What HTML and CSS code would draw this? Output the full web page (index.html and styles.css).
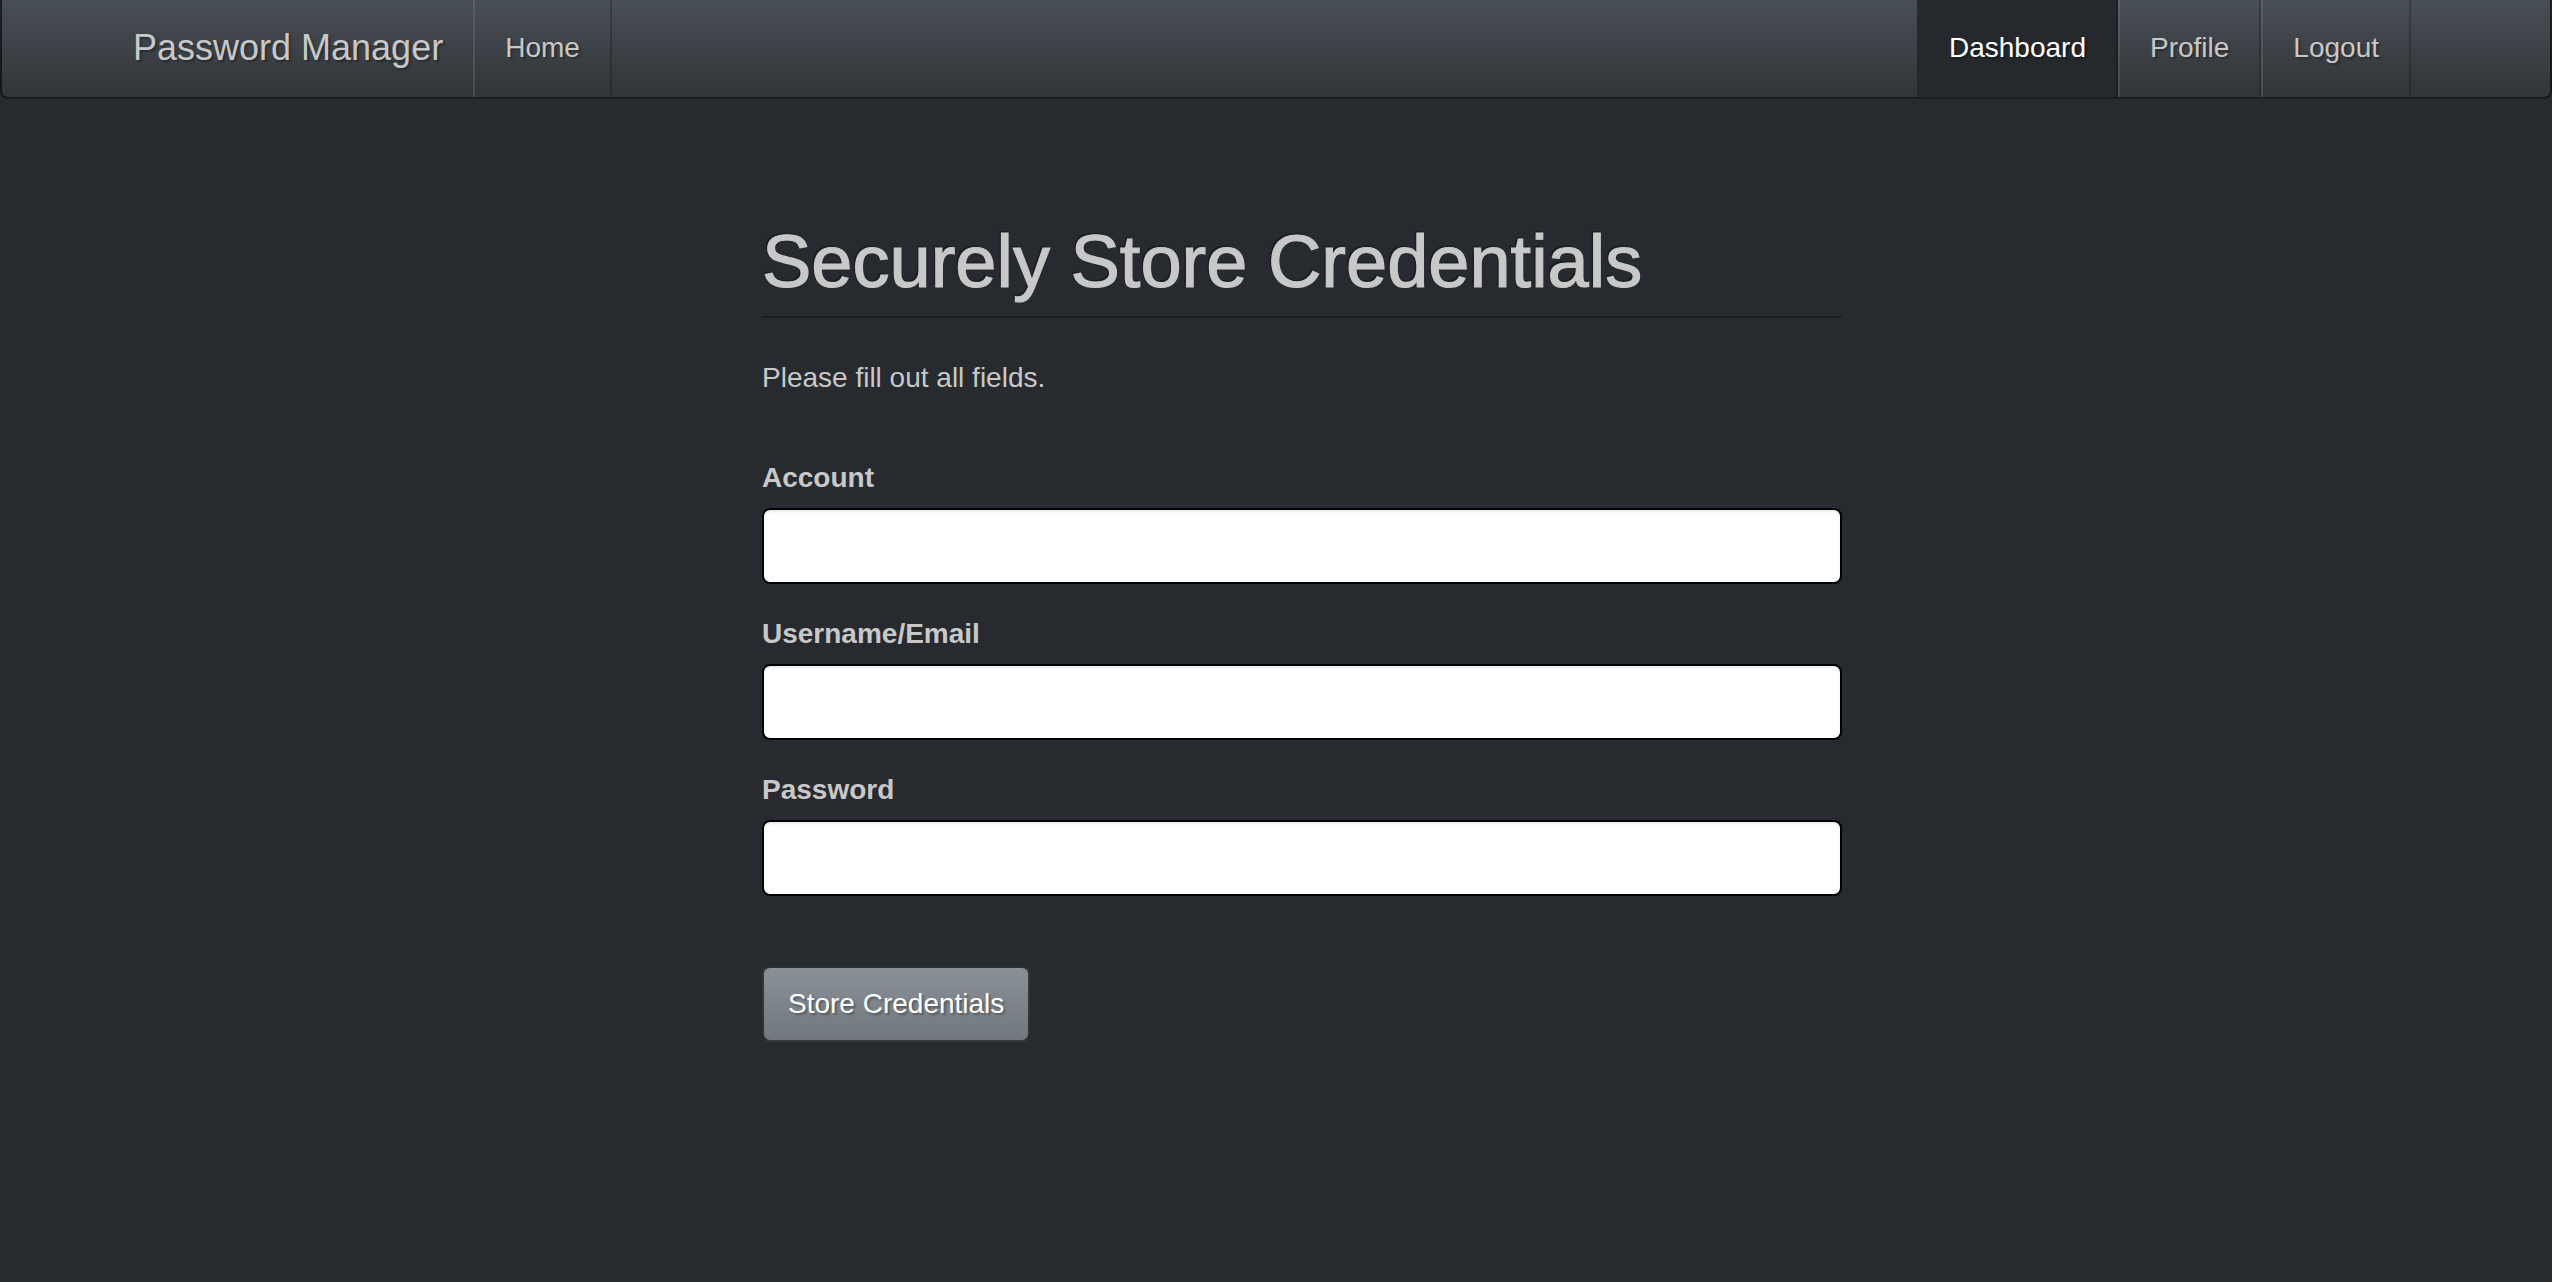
FILE: index.html
```
<!DOCTYPE html>
<html lang="en">
<head>
<meta charset="utf-8">
<title>Password Manager</title>
<link rel="stylesheet" href="styles.css">
</head>
<body>
<nav class="navbar">
  <div class="nav-left">
    <a class="brand" href="#">Password Manager</a>
    <ul class="nav">
      <li><a href="#">Home</a></li>
    </ul>
  </div>
  <ul class="nav">
    <li class="active"><a href="#">Dashboard</a></li>
    <li><a href="#">Profile</a></li>
    <li><a href="#">Logout</a></li>
  </ul>
</nav>
<main class="main">
  <div class="page-header">
    <h1>Securely Store Credentials</h1>
  </div>
  <p class="lead-text">Please fill out all fields.</p>
  <form class="form">
    <div class="group">
      <label for="account">Account</label>
      <input id="account" type="text">
    </div>
    <div class="group">
      <label for="username">Username/Email</label>
      <input id="username" type="text">
    </div>
    <div class="group">
      <label for="password">Password</label>
      <input id="password" type="password">
    </div>
    <button type="button" class="btn">Store Credentials</button>
  </form>
</main>
</body>
</html>
```
FILE: styles.css
```
* { box-sizing: border-box; }

html, body {
  margin: 0;
  padding: 0;
}

body {
  background: #272b30;
  color: #c8c8c8;
  font-family: "Liberation Sans", Arial, Helvetica, sans-serif;
  font-size: 28px;
  line-height: 40px;
}

.navbar {
  display: flex;
  justify-content: space-between;
  height: 99px;
  padding: 0 139px 0 101px;
  background-image: linear-gradient(#484e55, #3a3f44 60%, #313539);
  border: 2px solid rgba(0, 0, 0, 0.6);
  border-top: 0;
  border-radius: 0 0 8px 8px;
  text-shadow: 2px 2px 2px rgba(0, 0, 0, 0.3);
}

.nav-left {
  display: flex;
}

.brand {
  display: block;
  padding: 28px 30px 29px;
  font-size: 36px;
  line-height: 40px;
  color: #c8c8c8;
  text-decoration: none;
}

.nav {
  display: flex;
  list-style: none;
  margin: 0;
  padding: 0;
}

.nav a {
  display: block;
  padding: 28px 30px 29px;
  font-size: 28px;
  line-height: 40px;
  color: #c8c8c8;
  text-decoration: none;
  border-left: 2px solid rgba(255, 255, 255, 0.1);
  border-right: 2px solid rgba(0, 0, 0, 0.2);
}

.nav .active a {
  color: #fff;
  background: #25282c;
  border-left-color: transparent;
}

.main {
  width: 1080px;
  margin-left: 762px;
  padding-top: 122px;
}

.page-header {
  padding-bottom: 14px;
  border-bottom: 2px solid #1c1e22;
}

.page-header h1 {
  margin: 0;
  font-size: 74px;
  line-height: 81px;
  font-weight: normal;
  color: #c8c8c8;
  -webkit-text-stroke: 1.2px #c8c8c8;
  text-shadow: -2px -2px 0 rgba(0, 0, 0, 0.3);
}

.lead-text {
  margin: 40px 0 0;
}

.form {
  padding-top: 60px;
}

.group {
  margin-bottom: 30px;
}

.group label {
  display: block;
  margin-bottom: 10px;
  font-weight: bold;
  color: #c8c8c8;
}

.group input {
  display: block;
  width: 100%;
  height: 76px;
  padding: 16px 24px;
  font-family: inherit;
  font-size: 28px;
  color: #272b30;
  background: #fff;
  border: 2px solid #000;
  border-radius: 8px;
  box-shadow: inset 0 2px 2px rgba(0, 0, 0, 0.075);
}

.btn {
  display: inline-block;
  margin-top: 40px;
  padding: 16px 24px;
  font-family: inherit;
  font-size: 28px;
  line-height: 40px;
  color: #fff;
  background-image: linear-gradient(#8a9196, #7a8288 60%, #70787d);
  border: 2px solid rgba(0, 0, 0, 0.6);
  border-radius: 8px;
  text-shadow: 2px 2px 2px rgba(0, 0, 0, 0.3);
  cursor: pointer;
}
```
